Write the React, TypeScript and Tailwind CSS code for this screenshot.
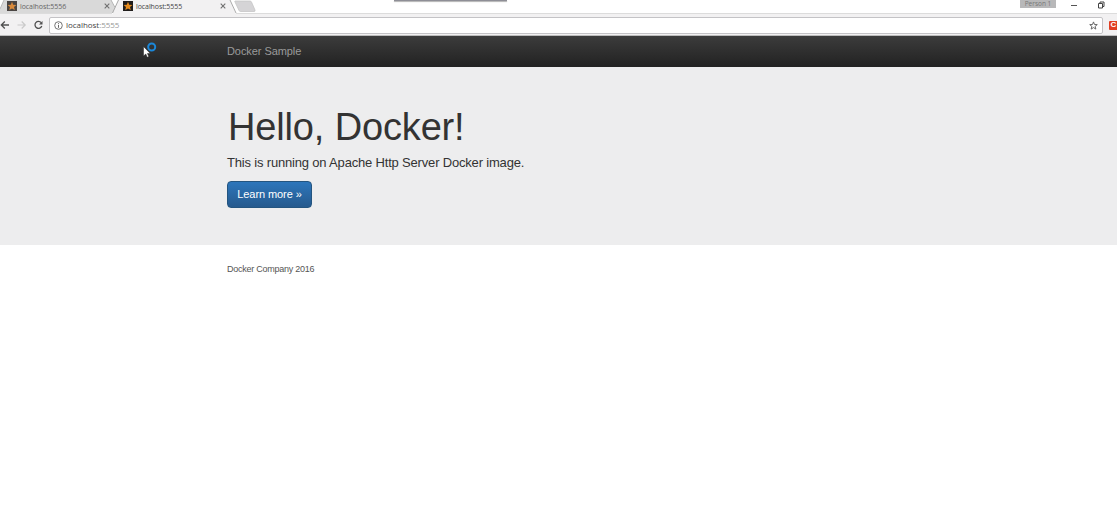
import React from "react";

function Favicon({ dim }: { dim?: boolean }) {
  return (
    <svg width="10" height="10" viewBox="0 0 10 10" className="block shrink-0">
      <rect width="10" height="10" fill={dim ? "#4a4543" : "#201d1c"} />
      <path d="M5 .7 6.2 3.7 9.4 3.9 7 6 7.8 9.1 5 7.5 2.2 9.1 3 6 .6 3.9 3.8 3.7Z" fill={dim ? "#d98a3c" : "#e58a1c"} />
    </svg>
  );
}

function Close() {
  return (
    <svg width="6" height="6" viewBox="0 0 6 6" className="block shrink-0">
      <path d="M.7.7 5.3 5.3M5.3.7.7 5.3" stroke="#707070" strokeWidth="1.1" />
    </svg>
  );
}

function TabStrip() {
  return (
    <div className="relative h-[14px] w-full bg-white">
      <svg width="1117" height="14" viewBox="0 0 1117 14" className="absolute left-0 top-0">
        <path d="M0 0H111L117.500 13H0Z" fill="#d9d9d9" />
        <path d="M0 9 4 0H0Z" fill="#fff" />
        <path d="M0 9 4 0" fill="none" stroke="#bbb" />
        <path d="M118 0H230L236 14H112.500Z" fill="#f2f1f2" />
        <path d="M112.500 13 118.500 0M230 0 236 13" fill="none" stroke="#aaa" />
        <path d="M111 0 115 7.500" fill="none" stroke="#b4b4b4" />
        <path d="M235 1H250Q251 1 251.500 2L255 10Q255.500 11.500 254 11.500H240.500Q239.500 11.500 239 10.500L235 2Q234.500 1 235 1Z" fill="#d5d4d6" stroke="#c2c2c2" strokeWidth=".7" />
        <path d="M0 13.500H112M236 13.500H1117" stroke="#dcdcdc" />
      </svg>
      <div className="relative flex h-[12px] items-center font-['Open_Sans',sans-serif] text-[7px] leading-[11px] text-[#666]">
        <div className="flex w-[115px] items-center pl-[7px]">
          <Favicon dim />
          <span className="ml-[3px] w-[84px] tracking-[-0.08px]">localhost:5556</span>
          <Close />
        </div>
        <div className="flex w-[120px] items-center pl-[8px] text-[#444]">
          <Favicon />
          <span className="ml-[3px] w-[84px] tracking-[-0.08px]">localhost:5555</span>
          <Close />
        </div>
      </div>
      <div className="absolute left-[394px] top-0 h-[1px] w-[113px] bg-[#8e8e96] shadow-[0_1px_1px_#aaa]" />
      <div className="absolute left-[1020px] top-0 h-[8px] w-[36px] bg-[#b8b8b9] text-center font-['Open_Sans',sans-serif] text-[6.5px] leading-[8px] text-[#777]">
        Person 1
      </div>
      <svg width="42" height="12" viewBox="0 0 42 12" className="absolute left-[1068px] top-0">
        <path d="M3 5.500H9" stroke="#555" />
        <path d="M30.500 3.500H34.500V8H30.500ZM32 3.500V2H36V6.500H34.500" fill="none" stroke="#444" />
      </svg>
    </div>
  );
}

function Toolbar() {
  return (
    <div className="flex h-[22px] w-full items-center overflow-hidden border-b border-[#bdbdbd] bg-[#f2f1f2] pt-[1px]">
      <svg width="49" height="18" viewBox="0 0 49 18" className="block shrink-0" fill="none">
        <path d="M9 9H1.500M4.800 5.500 1.300 9 4.800 12.500" stroke="#505050" strokeWidth="1.300" />
        <path d="M17.500 9H25M21.700 5.500 25.200 9 21.700 12.500" stroke="#cacaca" strokeWidth="1.200" />
        <path d="M41.200 6.600A3.500 3.500 0 1 0 41.800 10" stroke="#505050" strokeWidth="1.300" />
        <path d="M42.500 5V8.500H39Z" fill="#505050" />
      </svg>
      <div className="flex h-[17px] w-[1054px] shrink-0 items-center rounded-[2px] border border-[#c4c3c6] bg-white pl-[4px]">
        <svg width="9" height="9" viewBox="0 0 9 9" fill="none" className="block">
          <circle cx="4.500" cy="4.500" r="3.800" stroke="#666" strokeWidth=".9" />
          <path d="M4.500 4V6.800M4.500 2.200V3.200" stroke="#666" />
        </svg>
        <span className="ml-[3px] grow font-['Open_Sans',sans-serif] text-[8px] leading-[14px] tracking-[-0.04px] text-[#444]">
          localhost<span className="text-[#999]">:5555</span>
        </span>
        <svg width="9" height="9" viewBox="0 0 10 10" fill="none" className="mr-[4px] block">
          <path d="M5 1 6.100 3.900 9.200 4 6.800 6 7.600 9 5 7.300 2.400 9 3.200 6 .8 4 3.900 3.900Z" stroke="#666" strokeWidth="1.100" />
        </svg>
      </div>
      <div className="ml-[6px] flex h-[9px] w-[9px] shrink-0 items-center justify-center rounded-[1px] bg-[#e13e22] font-['Liberation_Sans',sans-serif] text-[8px] font-bold leading-none text-white">
        C
      </div>
    </div>
  );
}

function Pointer() {
  return (
    <svg width="16" height="18" viewBox="0 0 16 18" fill="none" className="absolute left-[142px] top-[41px]">
      <path d="M1.500 5.500V15L3.800 13 5.200 16.300 6.800 15.600 5.400 12.500H8.300Z" fill="#fff" stroke="#222" strokeWidth=".5" />
      <circle cx="9.700" cy="6" r="3.500" stroke="#1b87d8" strokeWidth="2" />
    </svg>
  );
}

export default function App() {
  return (
    <div className="relative h-[514px] w-[1117px] overflow-hidden bg-white font-['Liberation_Sans',Arial,sans-serif]">
      <TabStrip />
      <Toolbar />
      <nav className="flex h-[31px] items-center bg-linear-to-b from-[#3c3c3c] to-[#222] pl-[227px] text-[11px] text-[#9a9a9a]">
        <span className="tracking-[-0.07px]">Docker Sample</span>
      </nav>
      <main className="h-[178px] bg-[#ededee] pl-[227px] pt-[39px] text-[#333]">
        <h1 className="h-[43px] pl-[1px] text-[38px] leading-[43px] tracking-[-0.15px]">Hello, Docker!</h1>
        <p className="mt-[5px] h-[18px] text-[13px] leading-[18px] tracking-[-0.18px]">This is running on Apache Http Server Docker image.</p>
        <button className="mt-[9px] flex h-[27px] w-[85px] items-center justify-center rounded-[4px] border border-[#245580] bg-linear-to-b from-[#2d76bb] to-[#265a8e] text-[11px] tracking-[-0.08px] text-white">
          Learn more »
        </button>
      </main>
      <footer className="pl-[227px] pt-[18px] text-[9px] leading-[13px] tracking-[-0.25px] text-[#555]">Docker Company 2016</footer>
      <Pointer />
    </div>
  );
}
